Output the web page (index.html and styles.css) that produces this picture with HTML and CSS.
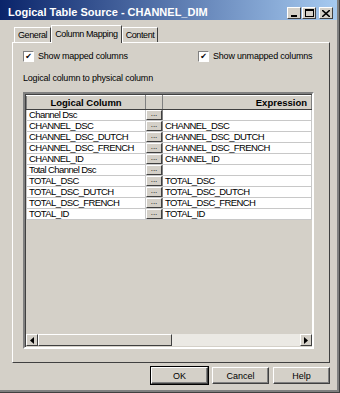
FILE: index.html
```html
<!DOCTYPE html>
<html lang="en">
<head>
  <meta charset="UTF-8">
  <title>Logical Table Source - CHANNEL_DIM</title>
  <link rel="stylesheet" href="styles.css">
</head>
<body>
  <div class="window">
    <div class="titlebar">
      <span class="title">Logical Table Source - CHANNEL_DIM</span>
      <div class="caption-buttons">
        <span class="cap-btn">
          <svg width="8" height="7" viewBox="0 0 8 7"><rect x="1" y="5" width="6" height="2" fill="#000"/></svg>
        </span>
        <span class="cap-btn">
          <svg width="9" height="8" viewBox="0 0 9 8"><rect x="0.5" y="0.5" width="8" height="7" fill="none" stroke="#000"/><rect x="0" y="0" width="9" height="2" fill="#000"/></svg>
        </span>
        <span class="cap-btn close">
          <svg width="8" height="7" viewBox="0 0 8 7"><path d="M0 0 L8 7 M8 0 L0 7" stroke="#000" stroke-width="1.6"/></svg>
        </span>
      </div>
    </div>

    <div class="tabs">
      <span class="tab">General</span>
      <span class="tab active">Column Mapping</span>
      <span class="tab">Content</span>
    </div>

    <div class="panel">
      <div class="checks">
        <label class="check left"><span class="box">&#10004;</span>Show mapped columns</label>
        <label class="check"><span class="box">&#10004;</span>Show unmapped columns</label>
      </div>
      <p class="caption">Logical column to physical column</p>

      <div class="grid">
        <table>
          <thead>
            <tr>
              <th class="col-logical">Logical Column</th>
              <th class="col-btn"></th>
              <th class="col-expr">Expression</th>
            </tr>
          </thead>
          <tbody>
            <tr><td>Channel Dsc</td><td class="col-btn"><span class="dots">...</span></td><td></td></tr>
            <tr><td>CHANNEL_DSC</td><td class="col-btn"><span class="dots">...</span></td><td>CHANNEL_DSC</td></tr>
            <tr><td>CHANNEL_DSC_DUTCH</td><td class="col-btn"><span class="dots">...</span></td><td>CHANNEL_DSC_DUTCH</td></tr>
            <tr><td>CHANNEL_DSC_FRENCH</td><td class="col-btn"><span class="dots">...</span></td><td>CHANNEL_DSC_FRENCH</td></tr>
            <tr><td>CHANNEL_ID</td><td class="col-btn"><span class="dots">...</span></td><td>CHANNEL_ID</td></tr>
            <tr><td>Total Channel Dsc</td><td class="col-btn"><span class="dots">...</span></td><td></td></tr>
            <tr><td>TOTAL_DSC</td><td class="col-btn"><span class="dots">...</span></td><td>TOTAL_DSC</td></tr>
            <tr><td>TOTAL_DSC_DUTCH</td><td class="col-btn"><span class="dots">...</span></td><td>TOTAL_DSC_DUTCH</td></tr>
            <tr><td>TOTAL_DSC_FRENCH</td><td class="col-btn"><span class="dots">...</span></td><td>TOTAL_DSC_FRENCH</td></tr>
            <tr><td>TOTAL_ID</td><td class="col-btn"><span class="dots">...</span></td><td>TOTAL_ID</td></tr>
          </tbody>
        </table>
        <div class="grid-fill"></div>
        <div class="hscroll">
          <span class="arrow">
            <svg width="4" height="7" viewBox="0 0 4 7"><path d="M4 0 L0 3.5 L4 7 Z" fill="#000"/></svg>
          </span>
          <span class="thumb"></span>
          <span class="track"></span>
          <span class="arrow">
            <svg width="4" height="7" viewBox="0 0 4 7"><path d="M0 0 L4 3.5 L0 7 Z" fill="#000"/></svg>
          </span>
        </div>
      </div>
    </div>

    <div class="buttons">
      <button class="btn default">OK</button>
      <button class="btn">Cancel</button>
      <button class="btn">Help</button>
    </div>
  </div>
</body>
</html>
```

FILE: styles.css
```css
body {
  margin: 0;
  background: #d4d0c8;
  font-family: 'Liberation Sans', Arial, sans-serif;
  font-size: 9px;
  letter-spacing: -0.2px;
  color: #000;
}

.window {
  width: 340px;
  height: 393px;
  box-sizing: border-box;
  background: #d4d0c8;
  border-right: 1px solid #404040;
  border-bottom: 1px solid #404040;
  box-shadow: inset -2px -2px 0 #808080;
  display: flex;
  flex-direction: column;
}

.titlebar {
  height: 19px;
  margin-right: 2px;
  display: flex;
  align-items: flex-end;
  justify-content: space-between;
  padding: 0 4px 1px 8px;
  background: linear-gradient(to right, #0a246a, #a6caf0);
}

.title {
  color: #fff;
  font-weight: bold;
  font-size: 11px;
  letter-spacing: 0;
  line-height: 14px;
}

.caption-buttons {
  display: flex;
  gap: 1px;
}

.cap-btn {
  width: 12px;
  height: 10px;
  display: flex;
  align-items: center;
  justify-content: center;
  background: #d4d0c8;
  border: 1px solid;
  border-color: #fff #404040 #404040 #fff;
}

.cap-btn.close {
  margin-left: 2px;
}

.tabs {
  display: flex;
  align-items: flex-end;
  margin: 4px 0 0 14px;
  height: 18px;
}

.tab {
  padding: 2px 3px 2px;
  border: 1px solid;
  border-color: #fff #404040 transparent #fff;
  border-bottom: none;
  line-height: 11px;
  letter-spacing: -0.4px;
  margin-bottom: -1px;
}

.tab.active {
  padding: 3px 3px 3px;
  background: #d4d0c8;
  position: relative;
  z-index: 1;
}

.panel {
  margin: 0 9px 0 12px;
  height: 321px;
  box-sizing: border-box;
  border: 1px solid;
  border-color: #fff #404040 #404040 #fff;
  padding: 8px 15px 0 10px;
}

.checks {
  display: flex;
  height: 11px;
  line-height: 11px;
}

.check {
  display: flex;
  align-items: center;
  gap: 4px;
  white-space: nowrap;
}

.check.left {
  width: 175px;
}

.box {
  width: 9px;
  height: 9px;
  background: #fff;
  border: 1px solid;
  border-color: #808080 #fff #fff #808080;
  font-family: 'DejaVu Sans', sans-serif;
  font-size: 8px;
  line-height: 9px;
  text-align: center;
  font-weight: bold;
}

.caption {
  margin: 11px 0 0;
  line-height: 11px;
}

.grid {
  margin-top: 8px;
  height: 257px;
  box-sizing: border-box;
  border: 2px solid;
  border-color: #808080 #fff #fff #808080;
  box-shadow: inset 1px 1px 0 #404040;
  display: flex;
  flex-direction: column;
  padding: 1px 0 0 1px;
  overflow: hidden;
}

table {
  border-collapse: collapse;
  width: 100%;
  table-layout: fixed;
}

thead tr {
  height: 14px;
}

th {
  background: #d4d0c8;
  font-weight: bold;
  font-size: 9.5px;
  letter-spacing: 0;
  line-height: 11px;
  padding: 0;
  border: 1px solid #808080;
  border-top-color: #fff;
  border-bottom: 1px solid #404040;
}

th.col-expr {
  text-align: right;
  padding-right: 4px;
}

.col-logical {
  width: 118px;
}

th.col-btn, td.col-btn {
  width: 16px;
}

tbody tr {
  height: 11px;
}

td {
  padding: 0 2px;
  background: #fff;
  border: 1px solid #c8c8c8;
  font-size: 9.5px;
  letter-spacing: -0.6px;
  line-height: 10px;
  white-space: nowrap;
  overflow: hidden;
}

td.col-btn {
  padding: 0;
  background: #d4d0c8;
  border-right-color: #808080;
}

.dots {
  display: block;
  height: 8px;
  border: 1px solid;
  border-color: #fff #404040 #404040 #fff;
  font-size: 8px;
  letter-spacing: 0;
  line-height: 6px;
  text-align: center;
}

.grid-fill {
  flex: 1;
}

.hscroll {
  height: 12px;
  display: flex;
  margin-bottom: 1px;
}

.arrow {
  width: 10px;
  display: flex;
  align-items: center;
  justify-content: center;
  border: 1px solid;
  border-color: #fff #404040 #404040 #fff;
  background: #d4d0c8;
}

.thumb {
  width: 132px;
  border: 1px solid;
  border-color: #fff #404040 #404040 #fff;
  background: #d4d0c8;
}

.track {
  flex: 1;
  background: #ebe9e4;
}

.buttons {
  display: flex;
  justify-content: flex-end;
  gap: 4px;
  margin: 4px 9px 0 0;
}

.btn {
  width: 57px;
  height: 17px;
  font-family: inherit;
  font-size: 9px;
  background: #d4d0c8;
  border: 1px solid;
  border-color: #fff #404040 #404040 #fff;
  box-shadow: inset -1px -1px 0 #808080;
  padding: 0;
}

.btn.default {
  outline: 1px solid #000;
  outline-offset: 0;
}
```
